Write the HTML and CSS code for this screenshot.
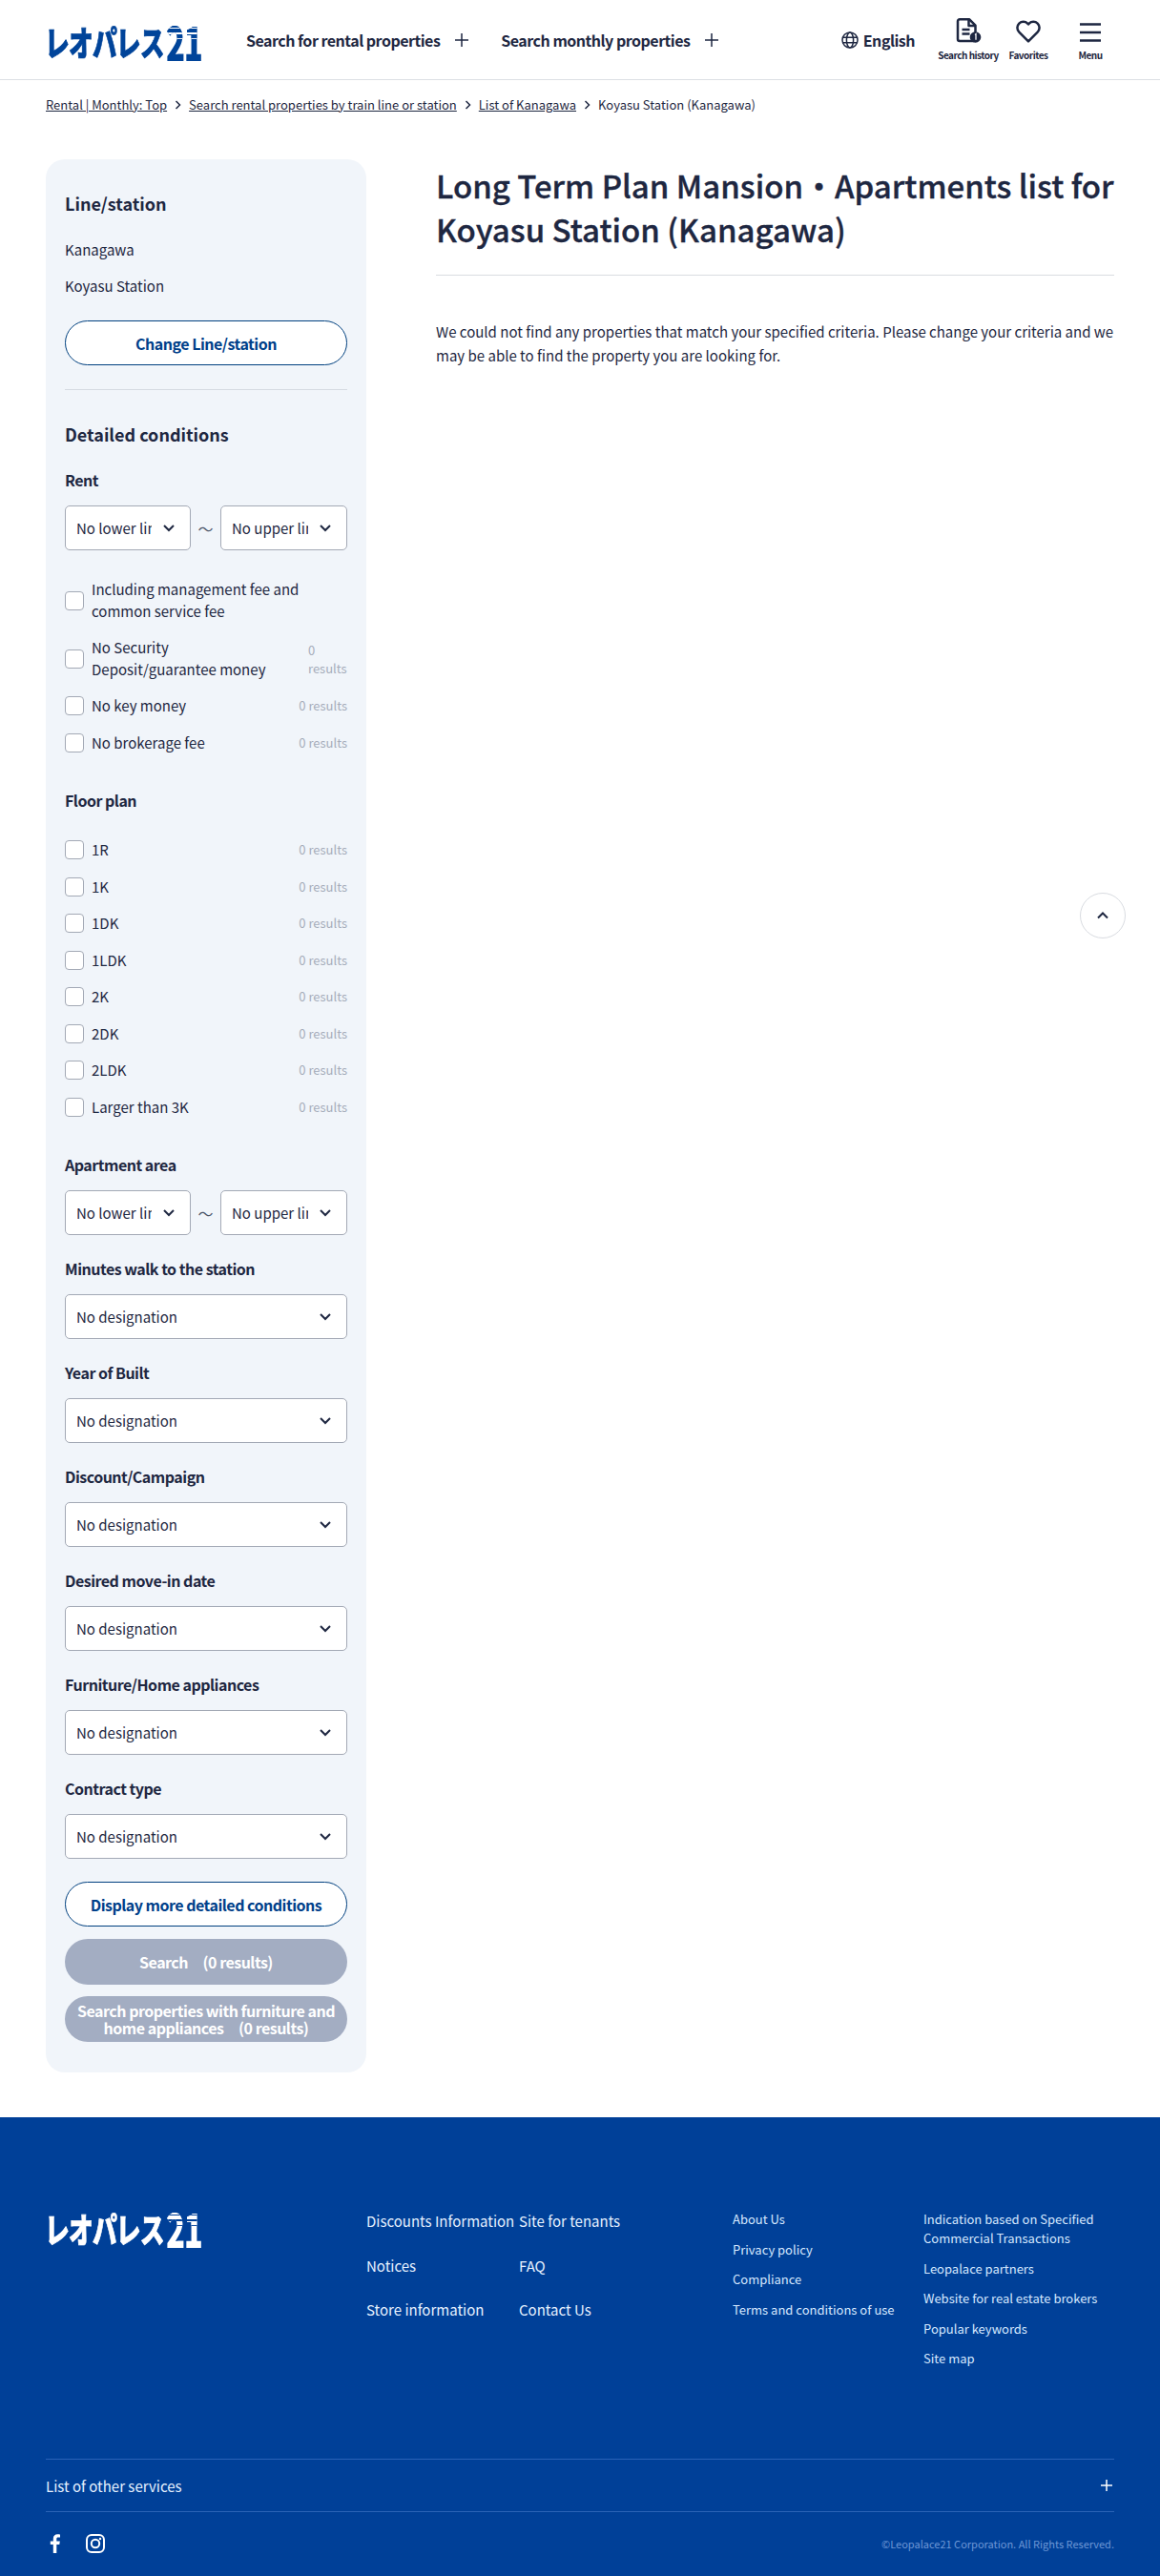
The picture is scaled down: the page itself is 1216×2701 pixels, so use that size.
FILE: index.html
```html
<!DOCTYPE html>
<html lang="en">
<head>
    <meta charset="UTF-8">
    <meta name="viewport" content="width=device-width, initial-scale=1.0">
    <title>Koyasu Station (Kanagawa) - Leopalace21</title>
    <link rel="stylesheet" href="styles.css">
</head>
<body>
    <header class="header">
        <a href="#" class="logo"><span class="logo-kana">レオパレス</span><span class="logo-num">21</span></a>
        <nav class="nav">
            <a href="#" class="nav-item">Search for rental properties
                <svg class="nav-plus" viewBox="0 0 14 14"><path d="M7 0v14M0 7h14"/></svg></a>
            <a href="#" class="nav-item">Search monthly properties
                <svg class="nav-plus" viewBox="0 0 14 14"><path d="M7 0v14M0 7h14"/></svg></a>
        </nav>
        <div class="tools">
            <a href="#" class="lang">
                <svg class="globe" viewBox="0 0 18 18"><circle cx="9" cy="9" r="8"/><ellipse cx="9" cy="9" rx="3.6" ry="8"/><path d="M1 6.3h16M1 11.7h16"/></svg>
                English
            </a>
            <a href="#" class="tool tool-history">
                <svg class="tool-icon" width="27" height="26" viewBox="0 0 27 26"><path class="line" d="M4 1.2h10l6.5 6.5V22a2 2 0 0 1-2 2H4a2 2 0 0 1-2-2V3.200a2 2 0 0 1 2-2z"/><path class="line" d="M13.500 1.500V8h6.500M6.500 12h8M6.500 16.500h8"/><circle class="badge" cx="20.500" cy="20" r="5.800"/><path class="badge-num" d="M20 17.500l1-.8v6"/></svg>
                <span>Search history</span>
            </a>
            <a href="#" class="tool tool-fav">
                <svg class="tool-icon" width="26" height="24" viewBox="0 0 26 24"><path class="line" d="M13 22.300 3.300 12.600a6.300 6.300 0 0 1 0-9 6.300 6.300 0 0 1 8.900 0l.8.900.8-.9a6.300 6.300 0 0 1 8.900 0 6.300 6.300 0 0 1 0 9z"/></svg>
                <span>Favorites</span>
            </a>
            <a href="#" class="tool tool-menu">
                <svg class="tool-icon" width="24" height="22" viewBox="0 0 24 22"><path class="line" d="M1 2.500h22M1 11h22M1 19.500h22"/></svg>
                <span>Menu</span>
            </a>
        </div>
    </header>

    <div class="breadcrumb">
        <a href="#">Rental | Monthly: Top</a>
        <svg class="crumb-arrow" viewBox="0 0 7 10"><path d="M1.500 1l4 4-4 4"/></svg>
        <a href="#">Search rental properties by train line or station</a>
        <svg class="crumb-arrow" viewBox="0 0 7 10"><path d="M1.500 1l4 4-4 4"/></svg>
        <a href="#">List of Kanagawa</a>
        <svg class="crumb-arrow" viewBox="0 0 7 10"><path d="M1.500 1l4 4-4 4"/></svg>
        <span>Koyasu Station (Kanagawa)</span>
    </div>

    <div class="container">
        <aside class="sidebar">
            <h2 class="side-title">Line/station</h2>
            <p class="side-text first">Kanagawa</p>
            <p class="side-text">Koyasu Station</p>
            <button class="btn btn-outline btn-change">Change Line/station</button>
            <hr class="side-line">

            <h2 class="side-title detailed">Detailed conditions</h2>
            <h3 class="label rent">Rent</h3>
            <div class="range">
                <div class="select"><span>No lower limit</span><svg class="chev" viewBox="0 0 12 8"><path d="M1 1l5 5 5-5"/></svg></div>
                <span class="tilde">～</span>
                <div class="select"><span>No upper limit</span><svg class="chev" viewBox="0 0 12 8"><path d="M1 1l5 5 5-5"/></svg></div>
            </div>
            <div class="checks checks-rent">
                <label class="check"><input type="checkbox"><span class="check-text">Including management fee and common service fee</span></label>
                <label class="check"><input type="checkbox"><span class="check-text">No Security Deposit/guarantee money</span><span class="count narrow">0 results</span></label>
                <label class="check"><input type="checkbox"><span class="check-text">No key money</span><span class="count">0 results</span></label>
                <label class="check"><input type="checkbox"><span class="check-text">No brokerage fee</span><span class="count">0 results</span></label>
            </div>

            <h3 class="label floor">Floor plan</h3>
            <div class="checks checks-floor">
                <label class="check"><input type="checkbox"><span class="check-text">1R</span><span class="count">0 results</span></label>
                <label class="check"><input type="checkbox"><span class="check-text">1K</span><span class="count">0 results</span></label>
                <label class="check"><input type="checkbox"><span class="check-text">1DK</span><span class="count">0 results</span></label>
                <label class="check"><input type="checkbox"><span class="check-text">1LDK</span><span class="count">0 results</span></label>
                <label class="check"><input type="checkbox"><span class="check-text">2K</span><span class="count">0 results</span></label>
                <label class="check"><input type="checkbox"><span class="check-text">2DK</span><span class="count">0 results</span></label>
                <label class="check"><input type="checkbox"><span class="check-text">2LDK</span><span class="count">0 results</span></label>
                <label class="check"><input type="checkbox"><span class="check-text">Larger than 3K</span><span class="count">0 results</span></label>
            </div>

            <div class="group area">
                <h3 class="label">Apartment area</h3>
                <div class="range">
                    <div class="select"><span>No lower limit</span><svg class="chev" viewBox="0 0 12 8"><path d="M1 1l5 5 5-5"/></svg></div>
                    <span class="tilde">～</span>
                    <div class="select"><span>No upper limit</span><svg class="chev" viewBox="0 0 12 8"><path d="M1 1l5 5 5-5"/></svg></div>
                </div>
            </div>
            <div class="group">
                <h3 class="label">Minutes walk to the station</h3>
                <div class="select"><span>No designation</span><svg class="chev" viewBox="0 0 12 8"><path d="M1 1l5 5 5-5"/></svg></div>
            </div>
            <div class="group">
                <h3 class="label">Year of Built</h3>
                <div class="select"><span>No designation</span><svg class="chev" viewBox="0 0 12 8"><path d="M1 1l5 5 5-5"/></svg></div>
            </div>
            <div class="group">
                <h3 class="label">Discount/Campaign</h3>
                <div class="select"><span>No designation</span><svg class="chev" viewBox="0 0 12 8"><path d="M1 1l5 5 5-5"/></svg></div>
            </div>
            <div class="group">
                <h3 class="label">Desired move-in date</h3>
                <div class="select"><span>No designation</span><svg class="chev" viewBox="0 0 12 8"><path d="M1 1l5 5 5-5"/></svg></div>
            </div>
            <div class="group">
                <h3 class="label">Furniture/Home appliances</h3>
                <div class="select"><span>No designation</span><svg class="chev" viewBox="0 0 12 8"><path d="M1 1l5 5 5-5"/></svg></div>
            </div>
            <div class="group">
                <h3 class="label">Contract type</h3>
                <div class="select"><span>No designation</span><svg class="chev" viewBox="0 0 12 8"><path d="M1 1l5 5 5-5"/></svg></div>
            </div>

            <button class="btn btn-outline btn-more">Display more detailed conditions</button>
            <button class="btn btn-off btn-search">Search　(0 results)</button>
            <button class="btn btn-off btn-furniture">Search properties with furniture and home appliances　(0 results)</button>
        </aside>

        <main class="content">
            <h1 class="title">Long Term Plan Mansion・Apartments list for Koyasu Station (Kanagawa)</h1>
            <p class="empty">We could not find any properties that match your specified criteria. Please change your criteria and we may be able to find the property you are looking for.</p>
        </main>
    </div>

    <a href="#" class="to-top"><svg viewBox="0 0 12 8"><path d="M1 6.500l5-5 5 5"/></svg></a>

    <footer class="footer">
        <div class="foot-top">
            <a href="#" class="logo logo-white"><span class="logo-kana">レオパレス</span><span class="logo-num">21</span></a>
            <ul class="foot-col foot-big col-a">
                <li>Discounts Information</li>
                <li>Notices</li>
                <li>Store information</li>
            </ul>
            <ul class="foot-col foot-big col-b">
                <li>Site for tenants</li>
                <li>FAQ</li>
                <li>Contact Us</li>
            </ul>
            <ul class="foot-col foot-small col-c">
                <li>About Us</li>
                <li>Privacy policy</li>
                <li>Compliance</li>
                <li>Terms and conditions of use</li>
            </ul>
            <ul class="foot-col foot-small col-d">
                <li>Indication based on Specified Commercial Transactions</li>
                <li>Leopalace partners</li>
                <li>Website for real estate brokers</li>
                <li>Popular keywords</li>
                <li>Site map</li>
            </ul>
        </div>
        <div class="foot-services">
            <span>List of other services</span>
            <svg class="foot-plus" viewBox="0 0 12 12"><path d="M6 0v12M0 6h12"/></svg>
        </div>
        <div class="foot-bottom">
            <div class="social">
                <svg width="13" height="20" viewBox="0 0 13 20"><path class="fb" d="M8.300 20v-9h3l.5-3.500H8.300V5.300c0-1 .3-1.700 1.800-1.700H12V.5C11.600.4 10.500.300 9.300.300 6.600.300 4.800 1.900 4.800 4.900v2.600h-3V11h3v9z"/></svg>
                <svg width="20" height="20" viewBox="0 0 20 20"><rect class="ig" x="1" y="1" width="18" height="18" rx="5"/><circle class="ig" cx="10" cy="10" r="4.200"/><circle class="ig-dot" cx="15" cy="5" r="1.200"/></svg>
            </div>
            <small class="copy">©Leopalace21 Corporation. All Rights Reserved.</small>
        </div>
    </footer>
</body>
</html>
```

FILE: styles.css
```css
* {
    box-sizing: border-box;
}
body {
    font-family: "Noto Sans CJK JP", "Noto Sans", sans-serif;
    margin: 0;
    padding: 0;
    background: #fff;
    color: #1e2741;
    position: relative;
}
a {
    color: inherit;
    text-decoration: none;
}
h1, h2, h3, p, ul {
    margin: 0;
    padding: 0;
}
ul {
    list-style: none;
}

/* logo */
.logo {
    display: block;
    position: relative;
    width: 163px;
    height: 36px;
    flex-shrink: 0;
    color: #00449a;
    --stripe: #fff;
}
.logo-white {
    color: #fff;
    --stripe: #004098;
}
.logo-kana {
    position: absolute;
    left: -1px;
    top: -1px;
    font-size: 30px;
    line-height: 40px;
    font-weight: 900;
    letter-spacing: -1px;
    white-space: nowrap;
    -webkit-text-stroke: .6px currentColor;
    transform: scale(.86, 1.2);
    transform-origin: left center;
}
.logo-num {
    position: absolute;
    left: 126px;
    top: -10px;
    font-size: 50px;
    line-height: 56px;
    font-weight: 900;
    letter-spacing: -2px;
    transform: scaleX(.66);
    transform-origin: left center;
    background: repeating-linear-gradient(to bottom, currentColor 0 4px, var(--stripe) 4px 5.500px) top / 100% 48% no-repeat,
        linear-gradient(currentColor, currentColor);
    -webkit-background-clip: text;
    background-clip: text;
    -webkit-text-fill-color: transparent;
}

/* header */
.header {
    display: flex;
    align-items: center;
    height: 84px;
    padding: 0 48px;
    border-bottom: 1px solid #dcdfe4;
}
.nav {
    display: flex;
    gap: 34px;
    margin-left: 47px;
}
.nav-item {
    display: flex;
    align-items: center;
    gap: 16px;
    font-size: 16px;
    font-weight: 700;
    letter-spacing: -.5px;
    line-height: 24px;
}
.nav-plus {
    width: 14px;
    height: 14px;
    fill: none;
    stroke: #1e2741;
    stroke-width: 1.500;
}
.tools {
    display: flex;
    align-items: center;
    margin-left: auto;
}
.lang {
    display: flex;
    align-items: center;
    gap: 5px;
    font-size: 16px;
    font-weight: 700;
    letter-spacing: -.5px;
    margin-right: 25px;
}
.globe {
    width: 18px;
    height: 18px;
    fill: none;
    stroke: #1e2741;
    stroke-width: 1.500;
}
.tool {
    display: flex;
    flex-direction: column;
    align-items: center;
    justify-content: flex-end;
    height: 46px;
    font-size: 10px;
    font-weight: 700;
    letter-spacing: -.5px;
    line-height: 14px;
    white-space: nowrap;
}
.tool-icon {
    margin-bottom: 6px;
    overflow: visible;
}
.tool-icon .line {
    fill: none;
    stroke: #1e2741;
    stroke-width: 2.500;
    stroke-linejoin: round;
}
.tool-icon .badge {
    fill: #1e2741;
}
.tool-icon .badge-num {
    fill: none;
    stroke: #fff;
    stroke-width: 1.300;
}
.tool-history {
    width: 62px;
}
.tool-fav {
    width: 40px;
    margin-left: 12px;
}
.tool-menu {
    width: 24px;
    margin-left: 33px;
    margin-right: 13px;
}

/* breadcrumb */
.breadcrumb {
    display: flex;
    align-items: center;
    gap: 8px;
    height: 20px;
    margin-top: 16px;
    padding: 0 48px;
    font-size: 13px;
    line-height: 20px;
}
.breadcrumb a {
    text-decoration: underline;
}
.crumb-arrow {
    width: 7px;
    height: 10px;
    fill: none;
    stroke: #1e2741;
    stroke-width: 1.500;
}

/* layout */
.container {
    display: flex;
    gap: 73px;
    margin-top: 47px;
    padding: 0 48px;
}
.sidebar {
    width: 336px;
    flex-shrink: 0;
    padding: 33px 20px 32px;
    background: #f1f5fa;
    border-radius: 20px;
}
.content {
    flex: 1;
    min-width: 0;
    padding-top: 4px;
}
.title {
    padding-bottom: 25px;
    font-size: 33px;
    font-weight: 500;
    -webkit-text-stroke: .35px currentColor;
    line-height: 46px;
    border-bottom: 1px solid #d9dce1;
}
.empty {
    margin-top: 46px;
    font-size: 15px;
    line-height: 25px;
}

/* sidebar parts */
.side-title {
    font-size: 18px;
    font-weight: 700;
    line-height: 26px;
}
.side-title.detailed {
    margin-top: 33px;
}
.side-text {
    margin-top: 16px;
    font-size: 15px;
    line-height: 22px;
}
.side-text.first {
    margin-top: 25px;
}
.side-line {
    margin: 25px 0 0;
    border: 0;
    border-top: 1px solid #d5dae2;
}
.label {
    font-size: 16px;
    font-weight: 700;
    letter-spacing: -.5px;
    line-height: 22px;
}
.label.rent {
    margin-top: 24px;
}
.label.floor {
    margin-top: 38px;
}
.range {
    display: flex;
    align-items: center;
    margin-top: 16px;
}
.tilde {
    width: 31px;
    text-align: center;
    font-size: 16px;
    color: #4b5568;
}
.select {
    display: flex;
    align-items: center;
    height: 47px;
    min-width: 0;
    padding: 0 16px 0 11px;
    background: #fff;
    border: 1px solid #a3a9b5;
    border-radius: 5px;
    font-size: 15px;
}
.select span {
    flex: 1;
    min-width: 0;
    overflow: hidden;
    white-space: nowrap;
    margin-right: 12px;
}
.range .select {
    flex: 0 0 132px;
}
.range .select:last-child {
    flex: 0 0 133px;
}
.chev {
    width: 12px;
    height: 8px;
    flex-shrink: 0;
    fill: none;
    stroke: #1e2741;
    stroke-width: 2;
}
.group {
    margin-top: 24px;
}
.group > .select {
    margin-top: 16px;
}
.group.area {
    margin-top: 38px;
}
.checks {
    display: flex;
    flex-direction: column;
    gap: 16px;
}
.checks-rent {
    margin-top: 30px;
}
.checks-floor {
    margin-top: 30px;
}
.check {
    display: flex;
    align-items: center;
    font-size: 15px;
    line-height: 22.500px;
}
.check input {
    appearance: none;
    -webkit-appearance: none;
    width: 20px;
    height: 20px;
    margin: 0 8px 0 0;
    flex-shrink: 0;
    background: #fff;
    border: 1px solid #a3a9b5;
    border-radius: 4px;
}
.check-text {
    flex: 1;
}
.count {
    flex-shrink: 0;
    margin-left: 8px;
    font-size: 13px;
    color: #a6adba;
}
.count.narrow {
    width: 41px;
    margin-left: 16px;
    line-height: 19px;
}

/* buttons */
.btn {
    display: block;
    width: 100%;
    border-radius: 24px;
    font-family: inherit;
    font-size: 16px;
    font-weight: 700;
    letter-spacing: -.5px;
}
.btn-outline {
    height: 47px;
    background: #fff;
    border: 1px solid #00407f;
    color: #00408a;
}
.btn-off {
    height: 48px;
    background: #a3adc2;
    border: 0;
    color: #fff;
}
.btn-change {
    margin-top: 25px;
}
.btn-more {
    margin-top: 24px;
}
.btn-search {
    margin-top: 13px;
}
.btn-furniture {
    margin-top: 12px;
    padding: 0 10px;
    line-height: 18px;
}

.to-top {
    position: absolute;
    top: 936px;
    left: 1132px;
    display: flex;
    align-items: center;
    justify-content: center;
    width: 48px;
    height: 48px;
    background: #fff;
    border: 1px solid #d9dce1;
    border-radius: 50%;
}
.to-top svg {
    width: 12px;
    height: 8px;
    fill: none;
    stroke: #1e2741;
    stroke-width: 2;
}

/* footer */
.footer {
    margin-top: 47px;
    height: 481px;
    padding: 97px 48px 0;
    background: #004098;
    color: #d6e8ff;
}
.foot-top {
    display: flex;
    height: 261px;
}
.foot-top .logo {
    width: 336px;
}
.foot-col {
    display: flex;
    flex-direction: column;
}
.foot-big {
    gap: 24.500px;
    font-size: 15px;
    line-height: 22px;
    color: #e6f1ff;
    padding-top: 1px;
}
.col-a {
    width: 160px;
}
.col-b {
    width: 224px;
}
.foot-small {
    gap: 11.600px;
    font-size: 13px;
    line-height: 20px;
}
.col-c {
    width: 200px;
}
.col-d {
    width: 200px;
}
.foot-services {
    display: flex;
    align-items: center;
    justify-content: space-between;
    height: 56px;
    border-top: 1px solid #2a62b6;
    border-bottom: 1px solid #2a62b6;
    font-size: 15px;
    color: #e6f1ff;
}
.foot-plus {
    width: 12px;
    height: 12px;
    margin-right: 2px;
    fill: none;
    stroke: #fff;
    stroke-width: 1.500;
}
.foot-bottom {
    display: flex;
    align-items: center;
    justify-content: space-between;
    margin-top: 23px;
}
.social {
    display: flex;
    align-items: center;
    gap: 26px;
    padding-left: 3px;
}
.fb {
    fill: #fff;
}
.ig {
    fill: none;
    stroke: #fff;
    stroke-width: 2;
}
.ig-dot {
    fill: #fff;
}
.copy {
    font-size: 11px;
    color: #6d97d6;
}
```
